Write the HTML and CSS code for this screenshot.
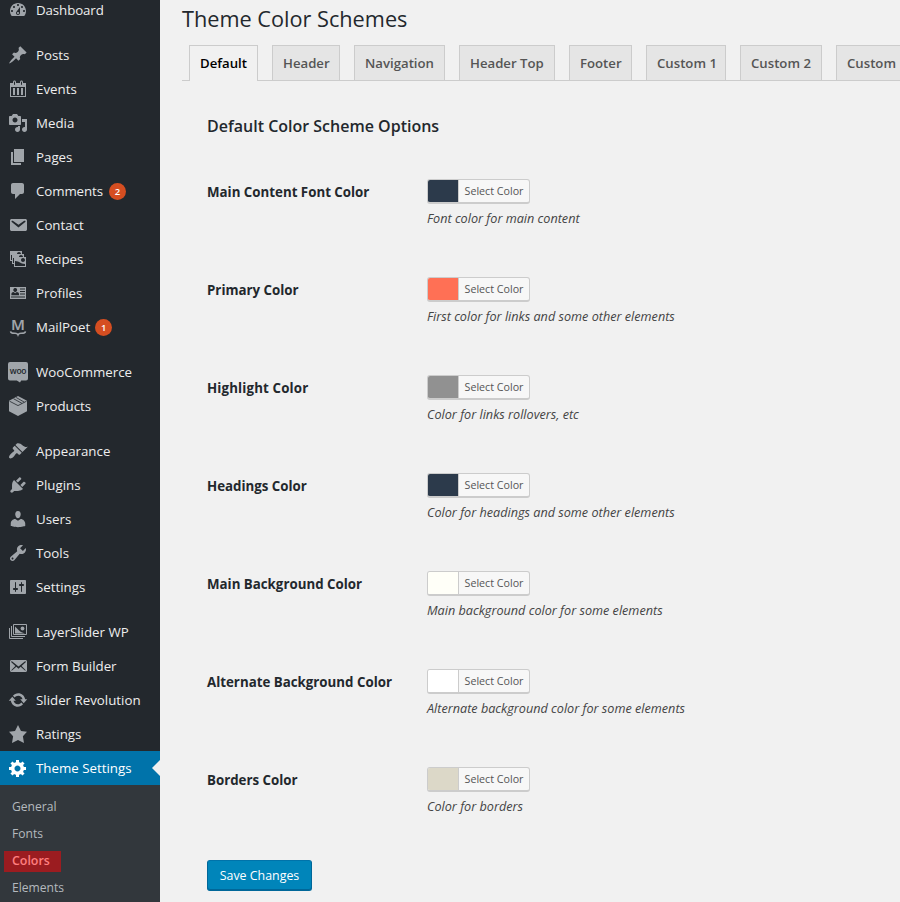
FILE: index.html
```
<!DOCTYPE html>
<html lang="en">
<head>
<meta charset="utf-8">
<title>Theme Color Schemes</title>
<link rel="stylesheet" href="styles.css">
</head>
<body>
<nav class="sidebar">
  <ul class="menu">
    <li class="item tight"><svg class="icon" viewBox="0 0 20 20"><path fill-rule="evenodd" d="M3.76 16h12.48c1.1-1.37 1.76-3.11 1.76-5 0-4.42-3.58-8-8-8s-8 3.58-8 8c0 1.89.66 3.63 1.76 5zM10 4c.55 0 1 .45 1 1s-.45 1-1 1-1-.45-1-1 .45-1 1-1zM6 6c.55 0 1 .45 1 1s-.45 1-1 1-1-.45-1-1 .45-1 1-1zm8 0c.55 0 1 .45 1 1s-.45 1-1 1-1-.45-1-1 .45-1 1-1zm-5.370 5.550L12 7v6c0 1.100-.9 2-2 2s-2-.9-2-2c0-.57.24-1.080.63-1.450zM4 10c.55 0 1 .45 1 1s-.45 1-1 1-1-.45-1-1 .45-1 1-1zm12 0c.55 0 1 .45 1 1s-.45 1-1 1-1-.45-1-1 .45-1 1-1zm-5 3c0-.55-.45-1-1-1s-1 .45-1 1 .45 1 1 1 1-.45 1-1z"/></svg><span>Dashboard</span></li>
    <li class="item group"><svg class="icon" viewBox="0 0 20 20"><path d="M10.440 3.020l1.820-1.820 6.360 6.350-1.830 1.820c-1.050-.68-2.480-.57-3.410.36l-.75.75c-.92.93-1.040 2.350-.35 3.410l-1.830 1.820-2.410-2.410-2.800 2.790c-.42.42-3.380 2.710-3.800 2.290s1.860-3.390 2.280-3.810l2.790-2.790L4.100 9.360l1.830-1.820c1.050.69 2.480.57 3.400-.36l.75-.75c.93-.92 1.050-2.350.36-3.410z"/></svg><span>Posts</span></li>
    <li class="item"><svg class="icon" viewBox="0 0 20 20"><path fill-rule="evenodd" d="M15 4h3v14H2V4h3V3c0-.83.67-1.500 1.500-1.500S8 2.170 8 3v1h4V3c0-.83.67-1.500 1.500-1.500S15 2.170 15 3v1zM6 3v2.500c0 .28.22.5.5.5s.5-.22.5-.5V3c0-.28-.22-.5-.5-.5S6 2.720 6 3zm7 0v2.500c0 .28.22.5.5.5s.5-.22.5-.5V3c0-.28-.22-.5-.5-.5s-.5.22-.5.5zm4 14V8H3v9h14zM7 9v7H5V9h2zm4 0v7H9V9h2zm4 0v7h-2V9h2z"/></svg><span>Events</span></li>
    <li class="item"><svg class="icon" viewBox="0 0 20 20"><path fill-rule="evenodd" d="M13 11V4c0-.55-.45-1-1-1h-1.670L9 1H5L3.670 3H2c-.55 0-1 .45-1 1v7c0 .55.45 1 1 1h10c.55 0 1-.45 1-1zM7 4.500c1.380 0 2.500 1.120 2.500 2.500S8.380 9.500 7 9.500 4.500 8.380 4.500 7 5.620 4.500 7 4.500zM14 6h5v10.500c0 1.380-1.120 2.500-2.500 2.500S14 17.880 14 16.500s1.120-2.500 2.500-2.500c.17 0 .34.02.5.05V9h-3V6zm-4 8.050V13h2v3.500c0 1.380-1.120 2.500-2.500 2.500S7 17.880 7 16.500 8.120 14 9.500 14c.17 0 .34.02.5.05z"/></svg><span>Media</span></li>
    <li class="item"><svg class="icon" viewBox="0 0 20 20"><path d="M6 15V2h10v13H6zm-1 1h8v2H3V5h2v11z"/></svg><span>Pages</span></li>
    <li class="item tight"><svg class="icon" viewBox="0 0 20 20"><path d="M5 2h9c1.100 0 2 .9 2 2v7c0 1.100-.9 2-2 2h-2l-5 5v-5H5c-1.100 0-2-.9-2-2V4c0-1.100.9-2 2-2z"/></svg><span>Comments</span><span class="badge">2</span></li>
    <li class="item"><svg class="icon" viewBox="0 0 20 20"><path fill-rule="evenodd" d="M3.870 4h13.250C18.370 4 19 4.590 19 5.790v8.420c0 1.190-.63 1.790-1.880 1.790H3.870c-1.250 0-1.880-.6-1.880-1.790V5.790c0-1.200.63-1.790 1.880-1.790zm6.620 8.600l6.740-5.530c.24-.2.43-.66.13-1.070-.29-.41-.82-.42-1.170-.17l-5.700 3.860L4.800 5.830c-.35-.25-.88-.24-1.170.17-.3.41-.11.87.13 1.070z"/></svg><span>Contact</span></li>
    <li class="item"><svg class="icon" viewBox="0 0 20 20"><path fill-rule="evenodd" d="M4 15v-3H2V2h12v3h2v3h2v10H6v-3H4zm7-12c-1.100 0-2 .9-2 2h4c0-1.100-.89-2-2-2zm-7 8V6H3v5h1zm7-3h4c0-1.100-.89-2-2-2-1.100 0-2 .9-2 2zm-5 6V9H5v5h1zm9-1c1.100 0 2-.89 2-2 0-1.100-.9-2-2-2s-2 .9-2 2c0 1.110.9 2 2 2zm2 4v-2c-5 0-5-3-10-3v5h10z"/></svg><span>Recipes</span></li>
    <li class="item"><svg class="icon" viewBox="0 0 20 20"><path fill-rule="evenodd" d="M2 4h16v12H2zM12 5.500v1h5v-1zM12 8v1h5V8zM12 10.500v1h5v-1zM3 13.500v1h14v-1zM7.200 5a1.900 1.900 0 0 0-1.200 3.400L7.200 9.200l1.200-.8A1.900 1.900 0 0 0 7.200 5zM3.400 12.200h7.600V11c0-1.200-1-2-2.200-2l-1.600 1.200L5.600 9c-1.200 0-2.200.8-2.200 2z"/></svg><span>Profiles</span></li>
    <li class="item"><svg class="icon" viewBox="0 0 20 20"><text class="mp" x="10" y="12.500" text-anchor="middle">M</text><path class="line" d="M2.500 14.300c.3 2.200 2.500 2 4.500 2 1.700 0 2.500.5 3 1.700.5-1.200 1.300-1.700 3-1.700 2 0 4.200.2 4.500-2"/></svg><span>MailPoet</span><span class="badge near">1</span></li>
    <li class="item group"><svg class="icon" viewBox="0 0 20 20"><path d="M2 0h16a2 2 0 0 1 2 2v14.500a2 2 0 0 1-2 2h-4.800L12 20.500l-3.200-2H2a2 2 0 0 1-2-2V2a2 2 0 0 1 2-2z"/><text class="woo" x="10" y="11.500" text-anchor="middle">woo</text></svg><span>WooCommerce</span></li>
    <li class="item"><svg class="icon" viewBox="0 0 20 20"><path d="M10 0l9 4.800v10.400L10 20l-9-4.800V4.800z"/><path class="cut" d="M1.500 5.200L10 9.600l8.500-4.400M5.500 2.700l8.500 4.700M8.200 1.500l8 4.600"/></svg><span>Products</span></li>
    <li class="item group"><svg class="icon" viewBox="0 0 20 20"><path d="M14.480 11.060L7.410 3.990l1.500-1.500c.5-.56 2.300-.47 3.510.32 1.210.8 1.430 1.280 2.910 2.100 1.180.64 2.450 1.260 4.450.85zm-.71.71L6.700 4.700 4.930 6.470c-.39.39-.39 1.020 0 1.410l1.060 1.060c.39.39.39 1.030 0 1.420-.6.6-1.430 1.110-2.210 1.690-.35.26-.7.53-1.010.84C1.430 14.230.4 16.080 1.400 17.070c.99 1 2.840-.03 4.180-1.360.31-.31.58-.66.85-1.020.57-.78 1.080-1.610 1.690-2.210.39-.39 1.020-.39 1.410 0l1.060 1.060c.39.39 1.020.39 1.410 0z"/></svg><span>Appearance</span></li>
    <li class="item"><svg class="icon" viewBox="0 0 20 20"><path d="M13.110 4.360L9.870 7.600 8 5.730l3.240-3.240c.35-.34 1.050-.2 1.560.32.52.51.66 1.210.31 1.550zm-8 1.770l.91-1.120 9.010 9.010-1.190.84c-.71.71-2.630 1.160-3.820 1.160H6.140L4.900 17.260c-.59.59-1.540.59-2.120 0-.59-.58-.59-1.530 0-2.120l1.240-1.240v-3.880c0-1.130.4-3.190 1.090-3.890zm7.260 3.970l3.240-3.240c.34-.35 1.040-.21 1.550.31.52.51.66 1.210.31 1.550l-3.240 3.250z"/></svg><span>Plugins</span></li>
    <li class="item"><svg class="icon" viewBox="0 0 20 20"><path d="M10 9.250c-2.270 0-2.730-3.440-2.730-3.440C7 4.020 7.820 2 9.970 2c2.160 0 2.980 2.020 2.710 3.810 0 0-.41 3.440-2.680 3.440zm0 2.570L12.720 10c2.390 0 4.520 2.330 4.520 4.530v2.490s-3.650 1.130-7.240 1.130c-3.650 0-7.240-1.130-7.240-1.130v-2.490c0-2.250 1.940-4.480 4.470-4.480z"/></svg><span>Users</span></li>
    <li class="item"><svg class="icon" viewBox="0 0 20 20"><path fill-rule="evenodd" d="M16.680 9.770c-1.340 1.340-3.300 1.670-4.950.99l-5.410 6.520c-.99.99-2.590.99-3.580 0s-.99-2.590 0-3.570l6.520-5.420c-.68-1.650-.35-3.610.99-4.950 1.280-1.280 3.120-1.620 4.720-1.060l-2.890 2.890 2.820 2.820 2.860-2.870c.53 1.580.18 3.390-1.080 4.650zM3.810 16.210c.4.39 1.040.39 1.430 0 .4-.4.4-1.040 0-1.430-.39-.4-1.030-.4-1.430 0-.39.39-.39 1.030 0 1.430z"/></svg><span>Tools</span></li>
    <li class="item"><svg class="icon" viewBox="0 0 20 20"><path fill-rule="evenodd" d="M18 16V4c0-.55-.45-1-1-1H3c-.55 0-1 .45-1 1v12c0 .55.45 1 1 1h14c.55 0 1-.45 1-1zM8 11h1c.55 0 1 .45 1 1s-.45 1-1 1H8v1.500c0 .28-.22.5-.5.5s-.5-.22-.5-.5V13H6c-.55 0-1-.45-1-1s.45-1 1-1h1V5.500c0-.28.22-.5.5-.5s.5.22.5.5V11zm5-2h-1c-.55 0-1-.45-1-1s.45-1 1-1h1V5.500c0-.28.22-.5.5-.5s.5.22.5.5V7h1c.55 0 1 .45 1 1s-.45 1-1 1h-1v5.500c0 .28-.22.5-.5.5s-.5-.22-.5-.5V9z"/></svg><span>Settings</span></li>
    <li class="item group"><svg class="icon" viewBox="0 0 20 20"><path class="line thin" d="M5.500 2.500h13v10h-13zM3.500 4v10.500H17M1.500 6v10.500H15"/><path d="M7 11.500V4.500l4 4 2 1.500 4 1.500z"/><circle cx="14.500" cy="6.500" r="1.900"/></svg><span>LayerSlider WP</span></li>
    <li class="item"><svg class="icon" viewBox="0 0 20 20"><path fill-rule="evenodd" d="M19 14.500v-9c0-.83-.67-1.500-1.500-1.500H3.490c-.83 0-1.500.67-1.500 1.500v9c0 .83.67 1.500 1.500 1.500H17.500c.83 0 1.500-.67 1.500-1.500zm-1.310-9.110c.33.33.15.67-.03.84L13.600 9.950l3.900 4.060c.12.14.2.36.06.51-.13.16-.43.15-.56.05l-4.370-3.730-2.140 1.950-2.130-1.950-4.370 3.730c-.13.1-.43.11-.56-.05-.14-.15-.06-.37.06-.51l3.900-4.060-4.060-3.720c-.18-.17-.36-.51-.03-.84s.67-.17.95.07l6.240 5.040 6.250-5.040c.28-.24.62-.4.95-.07z"/></svg><span>Form Builder</span></li>
    <li class="item"><svg class="icon" viewBox="0 0 20 20"><path d="M10.200 3.280c3.530 0 6.430 2.610 6.920 6h2.080l-3.500 4-3.500-4h2.320c-.45-1.970-2.210-3.450-4.320-3.450-1.450 0-2.730.71-3.540 1.780L4.950 5.660C6.230 4.200 8.110 3.280 10.200 3.280zm-.4 13.440c-3.520 0-6.430-2.610-6.920-6H.8l3.500-4c1.170 1.330 2.330 2.670 3.500 4H5.480c.45 1.970 2.210 3.450 4.320 3.450 1.450 0 2.730-.71 3.540-1.780l1.710 1.950c-1.280 1.460-3.150 2.380-5.250 2.380z"/></svg><span>Slider Revolution</span></li>
    <li class="item"><svg class="icon" viewBox="0 0 20 20"><path d="M10 1l3 6 6 .75-4.120 4.620L16 19l-6-3-6 3 1.130-6.630L1 7.750 7 7z"/></svg><span>Ratings</span></li>
    <li class="item current"><svg class="icon" viewBox="0 0 20 20"><path fill-rule="evenodd" d="M18 12h-2.180c-.17.7-.44 1.350-.81 1.930l1.540 1.540-2.100 2.100-1.540-1.540c-.58.36-1.230.63-1.910.79V19H8v-2.180c-.68-.16-1.330-.43-1.910-.79l-1.540 1.540-2.120-2.120 1.540-1.540c-.36-.58-.63-1.230-.79-1.910H1V9.030h2.170c.16-.7.44-1.350.8-1.940L2.430 5.550l2.100-2.100 1.540 1.540c.58-.37 1.240-.64 1.930-.81V2h3v2.180c.68.16 1.330.43 1.910.79l1.540-1.540 2.120 2.120-1.540 1.540c.36.59.64 1.240.8 1.940H18V12zm-8.500 1.500c1.660 0 3-1.340 3-3s-1.340-3-3-3-3 1.340-3 3 1.340 3 3 3z"/></svg><span>Theme Settings</span></li>
  </ul>
  <ul class="submenu">
    <li>General</li>
    <li>Fonts</li>
    <li class="selected">Colors</li>
    <li>Elements</li>
  </ul>
</nav>
<main class="content">
  <h1>Theme Color Schemes</h1>
  <div class="tabs">
    <a class="tab active w69">Default</a>
    <a class="tab w68">Header</a>
    <a class="tab w91">Navigation</a>
    <a class="tab w96">Header Top</a>
    <a class="tab w63">Footer</a>
    <a class="tab w80">Custom 1</a>
    <a class="tab w82">Custom 2</a>
    <a class="tab w82">Custom</a>
  </div>
  <section class="panel">
    <h2>Default Color Scheme Options</h2>
    <div class="row"><div class="label">Main Content Font Color</div><div><button class="picker"><span class="swatch navy"></span><span class="pick">Select Color</span></button><p>Font color for main content</p></div></div>
    <div class="row"><div class="label">Primary Color</div><div><button class="picker"><span class="swatch coral"></span><span class="pick">Select Color</span></button><p>First color for links and some other elements</p></div></div>
    <div class="row"><div class="label loose">Highlight Color</div><div><button class="picker"><span class="swatch gray"></span><span class="pick">Select Color</span></button><p>Color for links rollovers, etc</p></div></div>
    <div class="row"><div class="label">Headings Color</div><div><button class="picker"><span class="swatch navy"></span><span class="pick">Select Color</span></button><p>Color for headings and some other elements</p></div></div>
    <div class="row"><div class="label">Main Background Color</div><div><button class="picker"><span class="swatch ivory"></span><span class="pick">Select Color</span></button><p>Main background color for some elements</p></div></div>
    <div class="row"><div class="label">Alternate Background Color</div><div><button class="picker"><span class="swatch white"></span><span class="pick">Select Color</span></button><p>Alternate background color for some elements</p></div></div>
    <div class="row"><div class="label">Borders Color</div><div><button class="picker"><span class="swatch sand"></span><span class="pick">Select Color</span></button><p>Color for borders</p></div></div>
    <button class="save">Save Changes</button>
  </section>
</main>
</body>
</html>
```
FILE: styles.css
```
* { box-sizing: border-box; }
body { margin: 0; height: 902px; overflow: hidden; display: flex; background: #f1f1f1; color: #23282d; font-family: "Open Sans", "Noto Sans", sans-serif; font-size: 13.3px; white-space: nowrap; }
ul { list-style: none; margin: 0; padding: 0; }
.sidebar { width: 160px; height: 902px; flex: none; background: #23282d; color: #eee; overflow: hidden; }
.menu { margin-top: -7px; }
.item { display: flex; align-items: center; height: 34px; padding-left: 8px; position: relative; }
.tight { letter-spacing: -.1px; }
.group { margin-top: 11px; }
.icon { width: 20px; height: 20px; margin-right: 8px; flex: none; fill: #a0a5aa; overflow: visible; }
.line { fill: none; stroke: #a0a5aa; stroke-width: 1.5; }
.thin { stroke-width: 1; }
.cut { fill: none; stroke: #23282d; stroke-width: .8; }
.mp { font: 600 15px "Noto Sans", sans-serif; }
.woo { font: 600 8.5px "Open Sans", sans-serif; letter-spacing: -.3px; fill: #23282d; }
.badge { width: 17px; height: 17px; margin-left: 6px; border-radius: 50%; background: #d54e21; color: #fff; font-size: 9.5px; font-weight: 600; line-height: 17px; text-align: center; letter-spacing: 0; }
.near { margin-left: 5px; }
.current { background: #0073aa; color: #fff; }
.current .icon { fill: #fff; }
.current::after { content: ""; position: absolute; right: 0; top: 9px; border: 8px solid transparent; border-left: 0; border-right-color: #f1f1f1; }
.submenu { background: #32373c; height: 117px; padding-top: 8px; color: #b4b9be; font-size: 12.1px; }
.submenu li { height: 27px; padding-left: 12px; line-height: 27px; }
.submenu .selected { color: #ff7f7f; font-weight: 600; font-size: 12.4px; background: linear-gradient(#9b1c20, #9b1c20) 4px 4px / 57px 21px no-repeat; }
.content { flex: 1; min-width: 0; padding-left: 22px; overflow: hidden; }
h1 { margin: 0; height: 45px; padding-top: 4px; font-size: 21.7px; font-weight: 400; line-height: 30px; }
.tabs { display: flex; gap: 14px; height: 36px; padding-left: 7px; border-bottom: 1px solid #ccc; width: 800px; }
.tab { flex: none; height: 35px; border: 1px solid #ccc; border-bottom: 0; background: #e5e5e5; color: #555; font-size: 13.2px; font-weight: 600; line-height: 35px; padding-left: 10px; }
.active { height: 36px; background: #f1f1f1; color: #000; }
.w63 { width: 63px; }
.w68 { width: 68px; }
.w69 { width: 69px; }
.w80 { width: 80px; }
.w82 { width: 82px; }
.w91 { width: 91px; }
.w96 { width: 96px; }
.panel { padding-left: 25px; }
h2 { margin: 0; height: 98px; padding-top: 34px; font-size: 16px; font-weight: 600; line-height: 22px; }
.row { display: flex; height: 98px; }
.label { width: 220px; flex: none; font-size: 13.3px; font-weight: 700; line-height: 27px; }
.loose { letter-spacing: .15px; }
.picker { display: flex; width: 103px; height: 25px; padding: 0; border: 1px solid #ccc; border-bottom-width: 2px; border-radius: 3px; background: #f7f7f7; overflow: hidden; color: #555; font: 10.7px "Open Sans", sans-serif; }
.swatch { width: 30px; height: 22px; }
.pick { flex: 1; border-left: 1px solid #ccc; line-height: 22px; text-align: center; }
.navy { background: #2c3a4b; }
.coral { background: #ff7055; }
.gray { background: #919191; }
.ivory { background: #fffff8; }
.white { background: #fff; }
.sand { background: #dcd8c8; }
p { margin: 4px 0 0; font-size: 12.65px; font-style: italic; line-height: 20px; color: #444; }
.save { width: 105px; height: 31px; margin-top: -5px; padding: 0; border: 1px solid #006799; border-top-color: #0073aa; border-radius: 3px; background: #0085ba; color: #fff; font: 12.4px "Open Sans", sans-serif; box-shadow: inset 0 -1px 0 #006799; }
```
